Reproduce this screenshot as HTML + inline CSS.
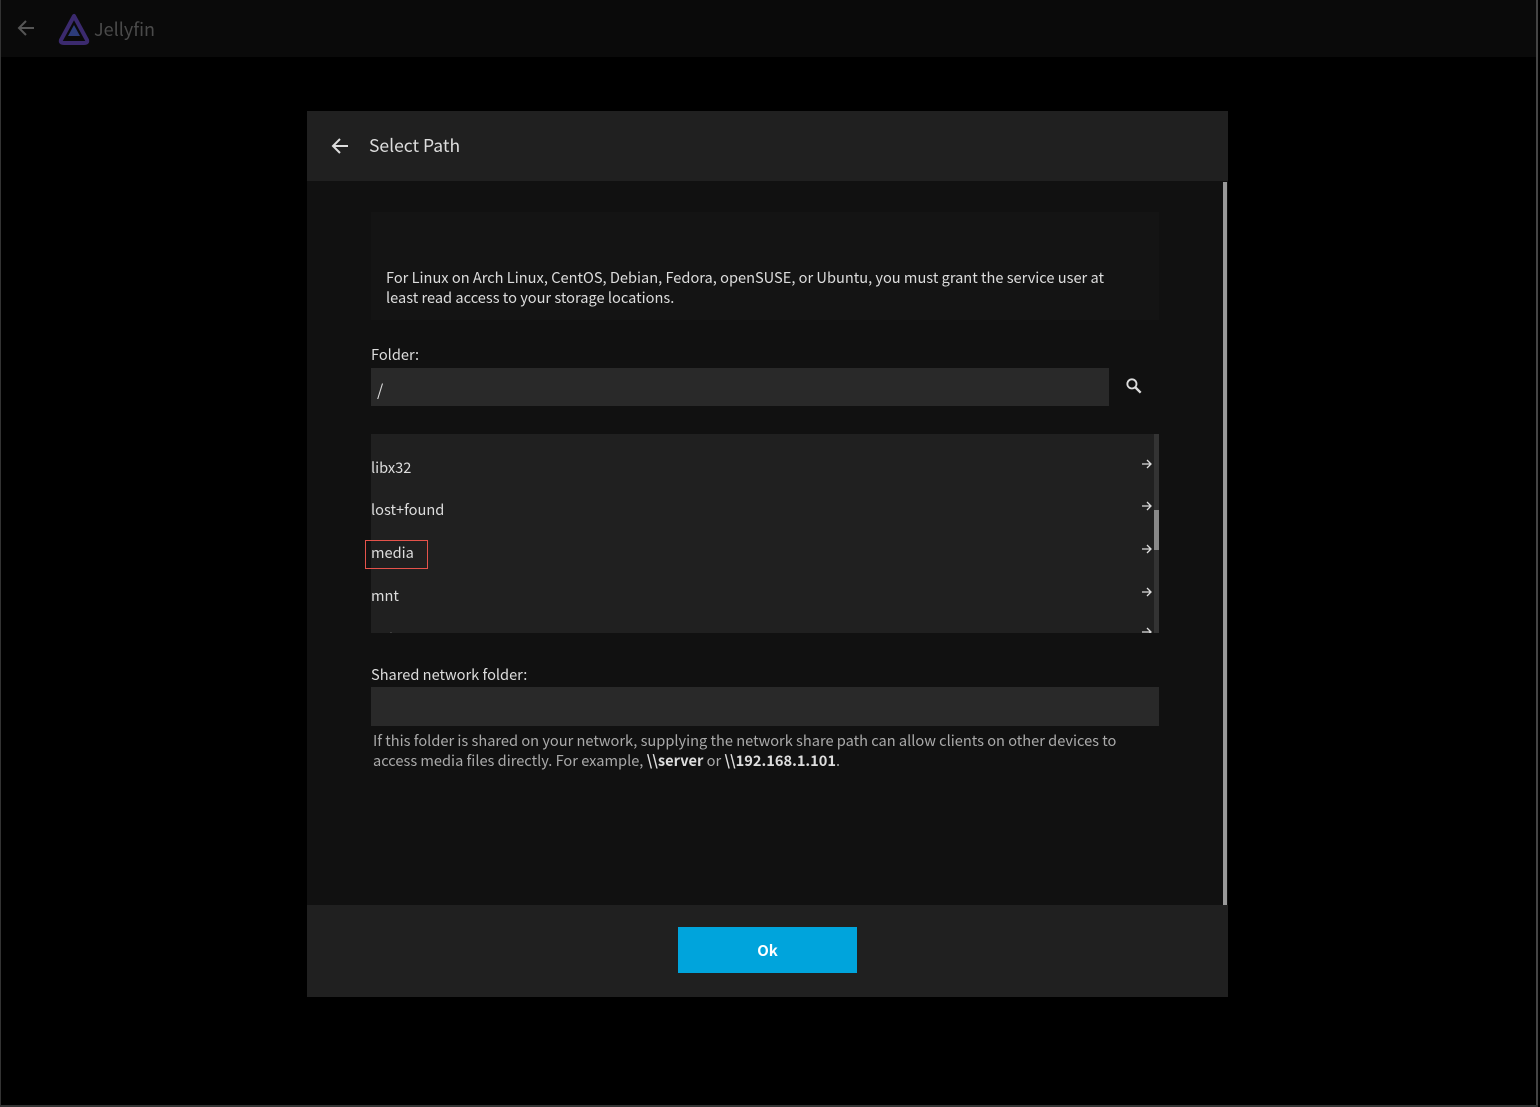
<!DOCTYPE html>
<html><head><style>
body{margin:0;width:1540px;height:1107px;background:#000;font-family:"Noto Sans CJK JP","Liberation Sans",sans-serif;position:relative;overflow:hidden;color:#ddd}
.a{position:absolute;line-height:20px}
</style></head><body>
<div class="a" style="left:0;top:0;width:1538px;height:57px;background:#0a0a0a"></div>
<div class="a" style="left:0;top:0;width:1px;height:1107px;background:#333"></div>
<div class="a" style="left:1536px;top:0;width:2px;height:1107px;background:#444"></div>
<div class="a" style="left:0;top:1105px;width:1538px;height:2px;background:#333"></div>
<svg class="a" style="left:15px;top:18px" width="22" height="20" viewBox="0 0 22 20"><path d="M19 10H4M11 3L4 10L11 17" stroke="#555" stroke-width="2" fill="none"/></svg>
<svg class="a" style="left:58px;top:13px" width="32" height="32" viewBox="0 0 32 32"><path d="M16 3L3 27Q2 30 6 30H26Q30 30 29 27Z" fill="none" stroke="#3b2a6e" stroke-width="4" stroke-linejoin="round"/><path d="M16 12L10 23H22Z" fill="#2c3c7a"/></svg>
<div class="a" style="left:94px;top:19px;font-size:18px;color:#4a4a4a">Jellyfin</div>

<div class="a" style="left:307px;top:111px;width:921px;height:886px;background:#111"></div>
<div class="a" style="left:307px;top:111px;width:921px;height:70px;background:#202020"></div>
<svg class="a" style="left:329px;top:135px" width="22" height="22" viewBox="0 0 22 22"><path d="M19 11H4M11 4L4 11L11 18" stroke="#ddd" stroke-width="2" fill="none"/></svg>
<div class="a" style="left:369px;top:136px;font-size:17.5px;color:#ddd">Select Path</div>
<div class="a" style="left:1223px;top:182px;width:4px;height:723px;background:#999"></div>

<div class="a" style="left:371px;top:212px;width:788px;height:108px;background:#141414"></div>
<div class="a" style="left:386px;top:268px;width:750px;font-size:14.6px;line-height:20px;color:#ddd">For Linux on Arch Linux, CentOS, Debian, Fedora, openSUSE, or Ubuntu, you must grant the service user at least read access to your storage locations.</div>

<div class="a" style="left:371px;top:345px;font-size:14.6px">Folder:</div>
<div class="a" style="left:371px;top:368px;width:738px;height:38px;background:#292929"></div>
<div class="a" style="left:377px;top:379px;font-size:16px">/</div>
<svg class="a" style="left:1124px;top:376px" width="20" height="20" viewBox="0 0 24 24"><circle cx="9.5" cy="9.5" r="5.5" stroke="#ddd" stroke-width="2.2" fill="none"/><path d="M13.5 13.5L20 20" stroke="#ddd" stroke-width="2.8"/></svg>

<div class="a" style="left:371px;top:434px;width:788px;height:199px;background:#202020;overflow:hidden">
 <div class="a" style="left:783px;top:0;width:5px;height:199px;background:#333"></div>
 <div class="a" style="left:783px;top:76px;width:5px;height:40px;background:#888"></div>
 <div class="a" style="left:0;top:24px;font-size:14.6px">libx32</div>
 <div class="a" style="left:0;top:66px;font-size:14.6px">lost+found</div>
 <div class="a" style="left:0;top:109px;font-size:14.6px">media</div>
 <div class="a" style="left:0;top:152px;font-size:14.6px">mnt</div>
 <div class="a" style="left:0;top:194px;font-size:14.6px">opt</div>
 <svg class="a" style="left:770px;top:24px" width="12" height="12" viewBox="0 0 12 12"><path d="M1 6H10M6 2L10 6L6 10" stroke="#ddd" stroke-width="1.3" fill="none"/></svg>
 <svg class="a" style="left:770px;top:66px" width="12" height="12" viewBox="0 0 12 12"><path d="M1 6H10M6 2L10 6L6 10" stroke="#ddd" stroke-width="1.3" fill="none"/></svg>
 <svg class="a" style="left:770px;top:109px" width="12" height="12" viewBox="0 0 12 12"><path d="M1 6H10M6 2L10 6L6 10" stroke="#ddd" stroke-width="1.3" fill="none"/></svg>
 <svg class="a" style="left:770px;top:152px" width="12" height="12" viewBox="0 0 12 12"><path d="M1 6H10M6 2L10 6L6 10" stroke="#ddd" stroke-width="1.3" fill="none"/></svg>
 <svg class="a" style="left:770px;top:192px" width="12" height="12" viewBox="0 0 12 12"><path d="M1 6H10M6 2L10 6L6 10" stroke="#ddd" stroke-width="1.3" fill="none"/></svg>
</div>
<div class="a" style="left:365px;top:540px;width:61px;height:27px;border:1px solid #e5534b"></div>

<div class="a" style="left:371px;top:665px;font-size:14.6px">Shared network folder:</div>
<div class="a" style="left:371px;top:687px;width:788px;height:39px;background:#292929"></div>
<div class="a" style="left:373px;top:731px;width:780px;font-size:14.6px;line-height:20px;color:#aaa">If this folder is shared on your network, supplying the network share path can allow clients on other devices to access media files directly. For example, <b style="color:#ddd">\\server</b> or <b style="color:#ddd">\\192.168.1.101</b>.</div>

<div class="a" style="left:307px;top:905px;width:921px;height:92px;background:#202020"></div>
<div class="a" style="left:678px;top:927px;width:179px;height:46px;background:#00a4dc;color:#fff;font-weight:bold;font-size:15px;text-align:center;line-height:48px">Ok</div>
</body></html>
